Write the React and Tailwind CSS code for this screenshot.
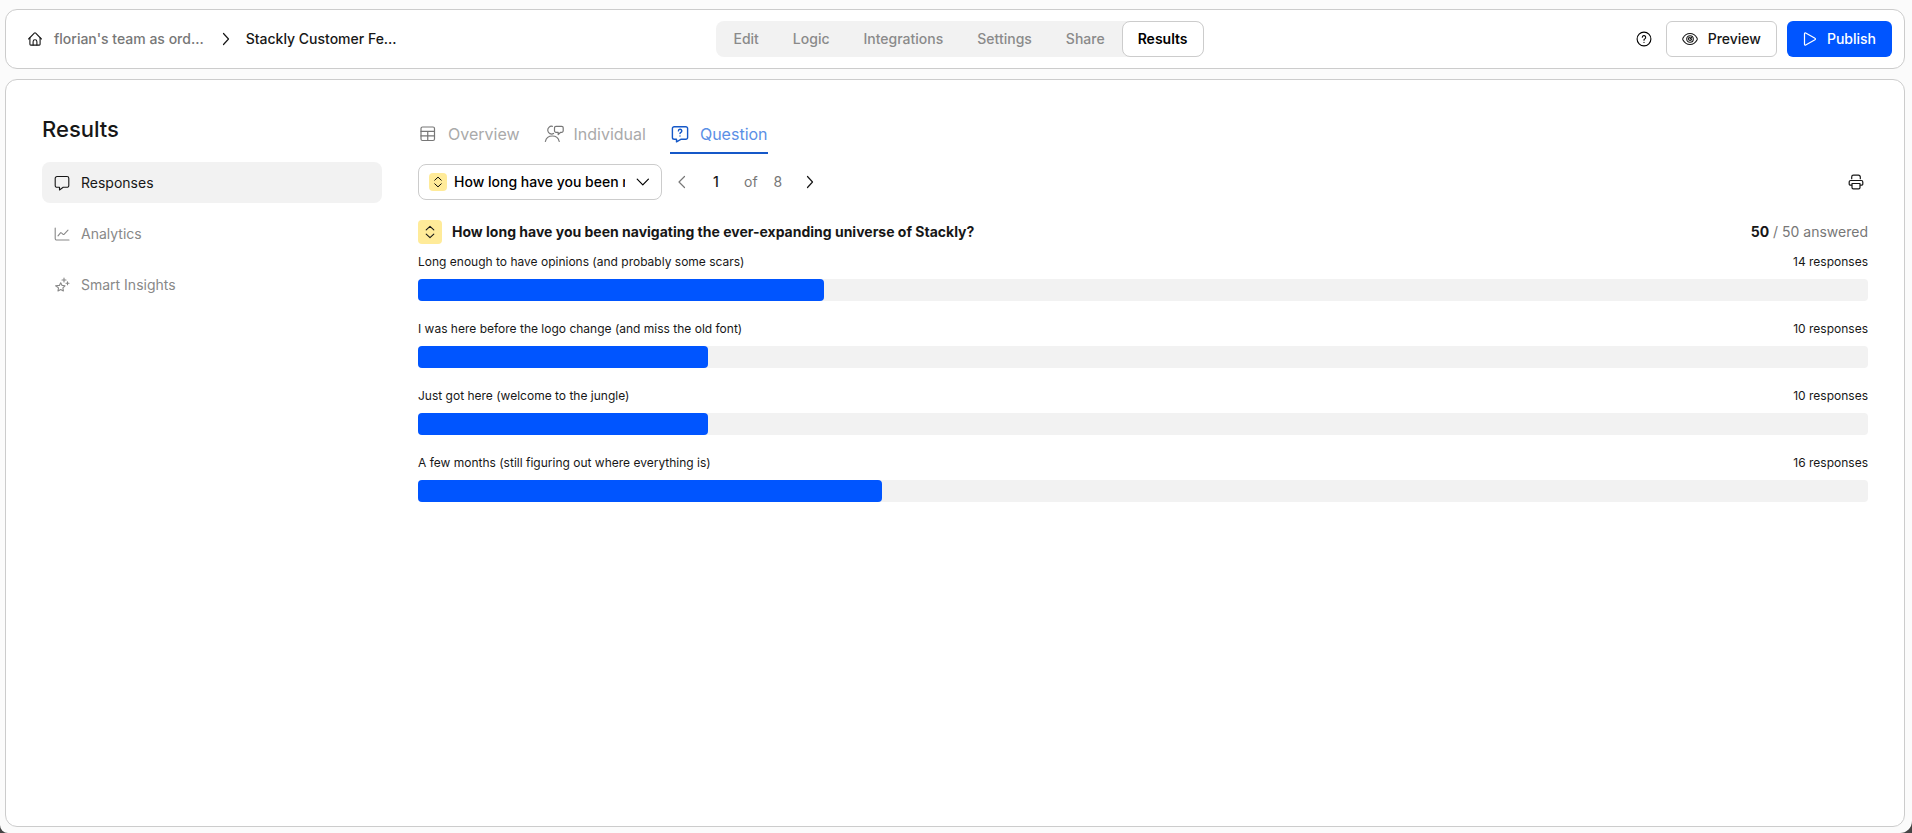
import React, { useState } from "react";

const Icon = ({ size = 16, box = 16, width = 1, className = "", children }) => (
  <svg
    width={size}
    height={size}
    viewBox={`0 0 ${box} ${box}`}
    fill="none"
    stroke="currentColor"
    strokeWidth={width}
    strokeLinecap="round"
    strokeLinejoin="round"
    className={`shrink-0 ${className}`}
    aria-hidden="true"
  >
    {children}
  </svg>
);

const HomeIcon = () => (
  <Icon size={14} box={14} width={1.1}>
    <path d="M1.9 5.9V12.2a.9.9 0 0 0 .9.9h8.4a.9.9 0 0 0 .9-.9V5.9" />
    <path d="M.6 7 6.3 1.1a1 1 0 0 1 1.4 0L13.4 7" />
    <path d="M5.1 13V9.7a1.9 1.9 0 0 1 3.8 0V13" />
  </Icon>
);

const HelpIcon = () => (
  <Icon width={1.1}>
    <circle cx="8" cy="8" r="6.9" />
    <path d="M6.3 6.3A1.7 1.7 0 1 1 8.7 7.900c-.5.2-.7.5-.7 1v.3M8 11.300v.1" />
  </Icon>
);

const EyeIcon = () => (
  <Icon width={1.1}>
    <path d="M8 2.500c3 0 5.600 1.900 7 4.400.3.700.3 1.400 0 2.100-1.400 2.600-4 4.500-7 4.500S2.400 11.600 1 9c-.3-.7-.3-1.400 0-2.100C2.400 4.400 5 2.500 8 2.500Z" />
    <circle cx="8" cy="8" r="3.300" />
    <path d="M8 6.300A1.600 1.600 0 1 0 9.600 8M8 8l1.600-1.600" />
  </Icon>
);

const PlayIcon = () => (
  <Icon size={14} box={14} width={1.2}>
    <path d="M1.500 1.800v10.400c0 .7.600 1.100 1.200.8l9.300-5.200c.6-.3.600-1.200 0-1.500L2.700 1c-.6-.3-1.200.1-1.200.8Z" />
  </Icon>
);

const ChatIcon = () => (
  <Icon width={1.1}>
    <path d="M3 1.500h10A1.800 1.800 0 0 1 14.800 3.300v7.200a1.800 1.800 0 0 1-1.800 1.800H9.200L5.500 15v-2.700H3a1.800 1.800 0 0 1-1.800-1.800V3.300A1.800 1.800 0 0 1 3 1.500Z" />
  </Icon>
);

const AnalyticsIcon = () => (
  <Icon width={1.1}>
    <path d="M1.200 2v10.500a1.500 1.500 0 0 0 1.500 1.500H15" />
    <path d="m4 9.800 2.500-3a.6.6 0 0 1 .9 0l1.700 1.500a.6.6 0 0 0 .9 0L14 4.200" />
  </Icon>
);

const InsightsIcon = () => (
  <Icon width={1.1}>
    <path d="m6.700 5.700 1.400 2.700 2.900.4-2.100 2.100.5 3-2.700-1.400L4 13.900l.5-3-2.900-2.100 3.800-.4Z" />
    <path d="M10 1v4M8 3h4M13.500 4.700v3M12 6.200h3" />
  </Icon>
);

const TableIcon = () => (
  <Icon size={20} box={20} width={1.2}>
    <rect x="3" y="3" width="13.500" height="13.500" rx="1.500" />
    <path d="M3 7.300h13.500M3 11.900h13.500M9.750 7.300v9.200" />
  </Icon>
);

const PersonChatIcon = () => (
  <Icon size={20} box={20} width={1.2}>
    <path d="M9.600 9.500A3.900 3.900 0 1 1 8.400 2.300" />
    <path d="M1.400 17.500c.7-3.300 3.500-5.500 6.900-5.500s6.200 2.200 6.900 5.500" />
    <path d="M12 2.300h5.700a1.500 1.500 0 0 1 1.500 1.500v3a1.500 1.500 0 0 1-1.500 1.500h-1L14.200 10.500V8.300H12a1.500 1.500 0 0 1-1.500-1.500v-3A1.500 1.500 0 0 1 12 2.300Z" />
  </Icon>
);

const QuestionIcon = () => (
  <Icon size={20} box={20} width={1.4}>
    <path d="M4.200 2.700h11.600A1.800 1.800 0 0 1 17.600 4.500v9a1.800 1.800 0 0 1-1.800 1.800h-5L6.500 17.800v-2.500H4.200A1.800 1.800 0 0 1 2.400 13.500v-9a1.800 1.800 0 0 1 1.800-1.800Z" />
    <path d="M8.400 6.900a1.700 1.700 0 1 1 2.300 1.600c-.5.200-.7.500-.7 1M10 11.900v.1" />
  </Icon>
);

const PrinterIcon = () => (
  <Icon width={1.2}>
    <path d="M3.700 4.700V3A1.800 1.800 0 0 1 5.500 1.200h5A1.800 1.800 0 0 1 12.300 3v1.700" />
    <path d="M3.500 11.200h-1a1.300 1.300 0 0 1-1.300-1.300V8a1.500 1.500 0 0 1 1.500-1.500h10.600A1.500 1.500 0 0 1 14.800 8v1.900a1.300 1.300 0 0 1-1.300 1.300h-1" />
    <path d="M4 9.500h8v4a1.300 1.300 0 0 1-1.300 1.300H5.300A1.300 1.300 0 0 1 4 13.500Z" />
  </Icon>
);

const SortIcon = ({ size }) => (
  <Icon size={size} box={14} width={1.1}>
    <path d="M3.200 4.900 7 1.300l3.800 3.600M3.200 9.100 7 12.700l3.800-3.600" />
  </Icon>
);

const ChevronRight = () => (
  <Icon width={1.2}>
    <path d="m5.500 2.500 5 5.500-5 5.500" />
  </Icon>
);

const ChevronLeft = () => (
  <Icon width={1.2}>
    <path d="m10.500 2.500-5.500 5.500 5.500 5.500" />
  </Icon>
);

const ChevronDown = () => (
  <Icon width={1.2}>
    <path d="m2.200 5.200 5.600 5.600 5.600-5.600" />
  </Icon>
);

const navItems = ["Edit", "Logic", "Integrations", "Settings", "Share", "Results"];

const sideItems = [
  { name: "Responses", icon: <ChatIcon /> },
  { name: "Analytics", icon: <AnalyticsIcon /> },
  { name: "Smart Insights", icon: <InsightsIcon /> },
];

const tabs = [
  { name: "Overview", icon: <TableIcon /> },
  { name: "Individual", icon: <PersonChatIcon /> },
  { name: "Question", icon: <QuestionIcon /> },
];

const question = "How long have you been navigating the ever-expanding universe of Stackly?";
const total = 50;

const answers = [
  { label: "Long enough to have opinions (and probably some scars)", count: 14 },
  { label: "I was here before the logo change (and miss the old font)", count: 10 },
  { label: "Just got here (welcome to the jungle)", count: 10 },
  { label: "A few months (still figuring out where everything is)", count: 16 },
];

const Header = () => {
  const [active, setActive] = useState("Results");

  return (
    <header className="grid grid-cols-[1fr_auto_1fr] items-center rounded-xl border border-[#cccccc] bg-white py-[11px] pl-[22px] pr-3 text-sm font-medium">
      <div className="flex items-center gap-3 text-[#171717]">
        <a href="#" className="flex items-center gap-3">
          <HomeIcon />
          <span className="text-[#777777]">florian's team as ord...</span>
        </a>
        <span className="ml-0.5">
          <ChevronRight />
        </span>
        <span>Stackly Customer Fe...</span>
      </div>

      <nav className="flex rounded-lg bg-[#f2f2f2]">
        {navItems.map((item) => (
          <button
            key={item}
            type="button"
            onClick={() => setActive(item)}
            className={
              item === active
                ? "h-9 rounded-lg border border-[#cccccc] bg-white px-[15px] font-semibold text-black"
                : "h-9 rounded-lg border border-transparent px-4 text-[#8a8a8a]"
            }
          >
            {item}
          </button>
        ))}
      </nav>

      <div className="flex items-center justify-end gap-2.5">
        <button type="button" aria-label="Help" className="p-1">
          <HelpIcon />
        </button>
        <button type="button" className="flex h-9 items-center gap-2.5 rounded-md border border-[#cccccc] px-[15px] text-[#171717]">
          <EyeIcon />
          Preview
        </button>
        <button type="button" className="flex h-9 items-center gap-2.5 rounded-md bg-[#0055ff] px-4 text-white">
          <PlayIcon />
          Publish
        </button>
      </div>
    </header>
  );
};

const Sidebar = () => {
  const [active, setActive] = useState("Responses");

  return (
    <aside className="w-[340px] shrink-0">
      <h1 className="mb-5 text-[22px] leading-[26px] font-medium text-[#171717]">Results</h1>
      <div className="flex flex-col gap-2.5">
        {sideItems.map((item) => (
          <button
            key={item.name}
            type="button"
            onClick={() => setActive(item.name)}
            className={
              item.name === active
                ? "flex h-[41px] items-center gap-[11px] rounded-lg bg-[#f2f2f2] px-3 text-sm text-[#171717]"
                : "flex h-[41px] items-center gap-[11px] rounded-lg px-3 text-sm text-[#888888]"
            }
          >
            {item.icon}
            {item.name}
          </button>
        ))}
      </div>
    </aside>
  );
};

const Tabs = () => {
  const [active, setActive] = useState("Question");

  return (
    <div className="flex gap-6">
      {tabs.map((tab) => (
        <button
          key={tab.name}
          type="button"
          onClick={() => setActive(tab.name)}
          className={
            tab.name === active
              ? "flex items-center gap-2.5 border-b-2 border-[#1558c8] pb-1.5 text-[#1558c8]"
              : "flex items-center gap-2.5 border-b-2 border-transparent pb-1.5 text-[#777777]"
          }
        >
          {tab.icon}
          <span className={tab.name === active ? "text-[#5b8fe6]" : "text-[#aaaaaa]"}>{tab.name}</span>
        </button>
      ))}
    </div>
  );
};

const Toolbar = () => {
  const [page, setPage] = useState("1");

  return (
    <div className="mt-2.5 flex items-center text-sm text-[#777777]">
      <label className="flex h-9 w-[244px] items-center rounded-lg border border-[#cccccc] px-2.5 text-black">
        <span className="flex size-[18px] shrink-0 items-center justify-center rounded bg-[#ffeb99]">
          <SortIcon size={12} />
        </span>
        <select aria-label="Question" className="ml-[7px] mr-2.5 h-6 min-w-0 flex-1 appearance-none overflow-hidden font-medium outline-none">
          <option>{question}</option>
        </select>
        <ChevronDown />
      </label>
      <button type="button" aria-label="Previous question" className="ml-3">
        <ChevronLeft />
      </button>
      <input
        aria-label="Question number"
        value={page}
        onChange={(e) => setPage(e.target.value)}
        className="ml-2.5 mr-3 w-8 text-center font-medium text-[#171717] outline-none"
      />
      <span className="mr-4">of</span>
      <span className="mr-5">8</span>
      <button type="button" aria-label="Next question" className="text-[#171717]">
        <ChevronRight />
      </button>
      <button type="button" aria-label="Print" className="ml-auto p-1 text-[#171717]">
        <PrinterIcon />
      </button>
    </div>
  );
};

const Answer = ({ label, count }) => (
  <li>
    <div className="flex justify-between text-xs text-[#171717]">
      <span>{label}</span>
      <span>{count} responses</span>
    </div>
    <div className="mt-[9px] h-[22px] rounded bg-[#f2f2f2]">
      <div className="h-full rounded bg-[#0055ff]" style={{ width: `${(count / total) * 100}%` }} />
    </div>
  </li>
);

const App = () => {
  return (
    <div className="bg-[#444444] font-['Inter',sans-serif]">
      <div className="flex min-h-screen flex-col gap-2.5 rounded-br-xl rounded-bl-lg bg-[#fbfbfb] pt-[9px] pr-[7px] pb-1.5 pl-[5px]">
        <Header />
        <main className="flex flex-1 gap-9 rounded-xl border border-[#cccccc] bg-white px-9 py-9">
          <Sidebar />
          <section className="min-w-0 flex-1 pt-1.5">
            <Tabs />
            <Toolbar />
            <div className="mt-5 flex items-center text-sm text-[#171717]">
              <span className="mr-2.5 flex size-6 items-center justify-center rounded bg-[#ffeb99]">
                <SortIcon size={14} />
              </span>
              <h2 className="font-bold">{question}</h2>
              <p className="ml-auto text-[#777777]">
                <span className="font-bold text-[#171717]">50</span> / {total} answered
              </p>
            </div>
            <ul className="mt-2.5 flex flex-col gap-5">
              {answers.map((answer) => (
                <Answer key={answer.label} {...answer} />
              ))}
            </ul>
          </section>
        </main>
      </div>
    </div>
  );
};

export default App;
